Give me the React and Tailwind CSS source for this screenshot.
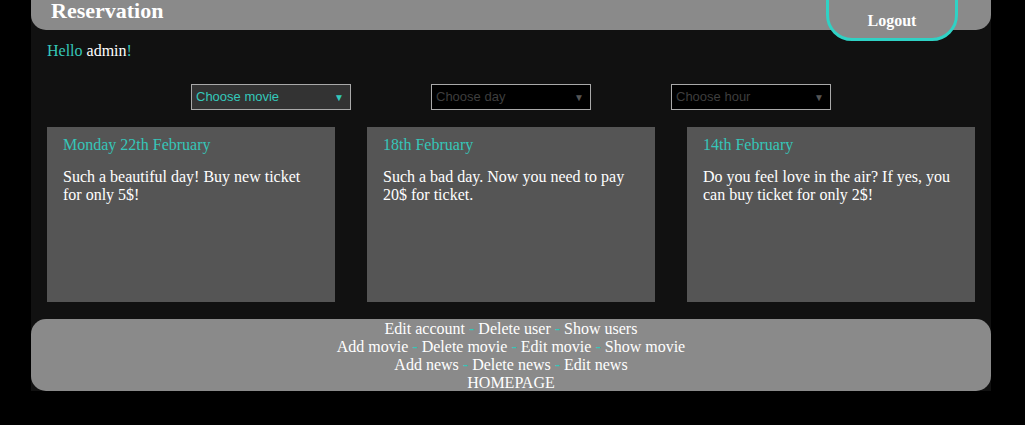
import React from "react";

const serif = { fontFamily: '"Liberation Serif", "Times New Roman", serif' };

const news = [
  { date: "Monday 22th February", text: "Such a beautiful day! Buy new ticket for only 5$!" },
  { date: "18th February", text: "Such a bad day. Now you need to pay 20$ for ticket." },
  { date: "14th February", text: "Do you feel love in the air? If yes, you can buy ticket for only 2$!" },
];

const menu = [
  ["Edit account", "Delete user", "Show users"],
  ["Add movie", "Delete movie", "Edit movie", "Show movie"],
  ["Add news", "Delete news", "Edit news"],
  ["HOMEPAGE"],
];

const Select = ({ label, active }) => (
  <div
    className={`w-[160px] h-[26px] border border-[#a9a9a9] flex items-center justify-between pl-[4px] pr-[6px] text-[13px] ${active ? "bg-[#333] text-[#33c9bb]" : "bg-black text-[#3e3e3e]"}`}
    style={{ fontFamily: '"Liberation Sans", Arial, sans-serif' }}
  >
    <span>{label}</span>
    <span className={`text-[10px] ${active ? "text-[#33c9bb]" : "text-[#555]"}`}>▼</span>
  </div>
);

const App = () => {
  return (
    <div className="min-h-[425px] bg-black" style={serif}>
      <div className="relative w-[960px] ml-[31px] bg-[#111] h-[391px] flex flex-col">
        <div className="h-[30px] bg-[#8a8a8a] rounded-b-[15px] pl-[20px]">
          <h1 className="text-[22px] font-bold text-white leading-[22px]">Reservation</h1>
        </div>
        <div className="absolute left-[795px] top-[-20px] w-[132px] h-[61px] border-[3px] border-[#2fd2c5] rounded-b-[26px] bg-[#8a8a8a] flex items-end justify-center pb-[8px]">
          <span className="text-white font-bold text-[16px] leading-[18px]">Logout</span>
        </div>
        <div className="pl-[16px] pt-[12px] text-[16px] leading-[18px] text-[#36c6b9]">
          Hello <span className="text-white">admin</span>!
        </div>
        <div className="flex justify-center gap-[80px] mt-[24px]">
          <Select label="Choose movie" active />
          <Select label="Choose day" />
          <Select label="Choose hour" />
        </div>
        <div className="flex gap-[32px] px-[16px] mt-[17px]">
          {news.map((n) => (
            <div key={n.date} className="w-[288px] h-[175px] bg-[#555] px-[16px] pt-[9px]">
              <div className="text-[#36c6b9] text-[16px] leading-[18px]">{n.date}</div>
              <div className="text-white text-[16px] leading-[18px] mt-[14px]">{n.text}</div>
            </div>
          ))}
        </div>
        <div className="mt-auto h-[72px] bg-[#8a8a8a] rounded-[15px] flex flex-col items-center pt-[1px]">
          {menu.map((row, i) => (
            <div key={i} className="text-white text-[16px] leading-[18px]">
              {row.map((item, j) => (
                <React.Fragment key={item}>
                  {j > 0 && <span className="text-[#36c6b9]"> - </span>}
                  <span>{item}</span>
                </React.Fragment>
              ))}
            </div>
          ))}
        </div>
      </div>
    </div>
  );
};

export default App;
